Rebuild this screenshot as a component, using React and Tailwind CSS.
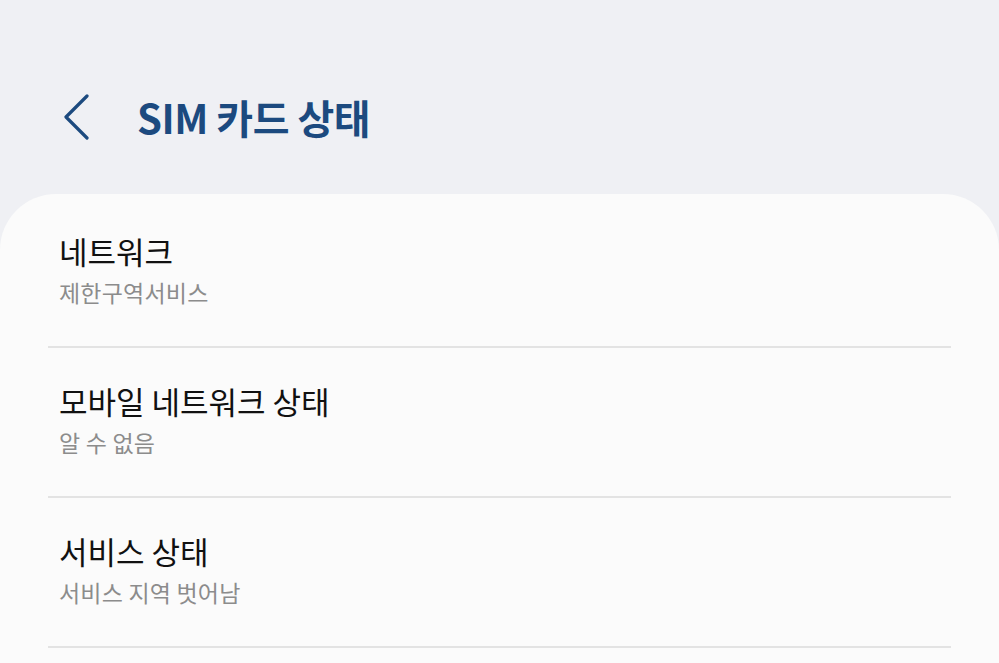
import React from 'react';

const rows = [
  { title: '네트워크', sub: '제한구역서비스' },
  { title: '모바일 네트워크 상태', sub: '알 수 없음' },
  { title: '서비스 상태', sub: '서비스 지역 벗어남' },
];

const font = { fontFamily: '"Noto Sans CJK KR", "Noto Sans", sans-serif' };

export default function App() {
  return (
    <div className="w-[999px] h-[663px] overflow-hidden bg-[#eff0f4] flex flex-col" style={font}>
      {/* Header */}
      <div className="h-[194px] flex items-start pt-[94px] pl-[62px]">
        <svg width="28" height="46" viewBox="0 0 28 46">
          <path d="M25 2 L4 23 L25 44" fill="none" stroke="#1c4a7f" strokeWidth="3.2" strokeLinecap="round" strokeLinejoin="round" />
        </svg>
        <h1 className="ml-[47px] text-[40px] leading-[46px] font-bold text-[#1c4a7f] tracking-[-0.5px]">SIM 카드 상태</h1>
      </div>

      {/* Card */}
      <div className="flex-1 bg-[#fbfbfb] rounded-t-[56px] pt-[4px]">
        {rows.map((r, i) => (
          <div key={i}>
            <div className="h-[148px] pt-[33px] px-[59px]">
              <div className="text-[31px] leading-[40px] text-[#111111]">{r.title}</div>
              <div className="mt-[6px] text-[23px] leading-[30px] text-[#8c8c8c] tracking-[0.2px]">{r.sub}</div>
            </div>
            <div className="mx-[48px] h-[2px] bg-[#e3e3e3]" />
          </div>
        ))}
      </div>
    </div>
  );
}
